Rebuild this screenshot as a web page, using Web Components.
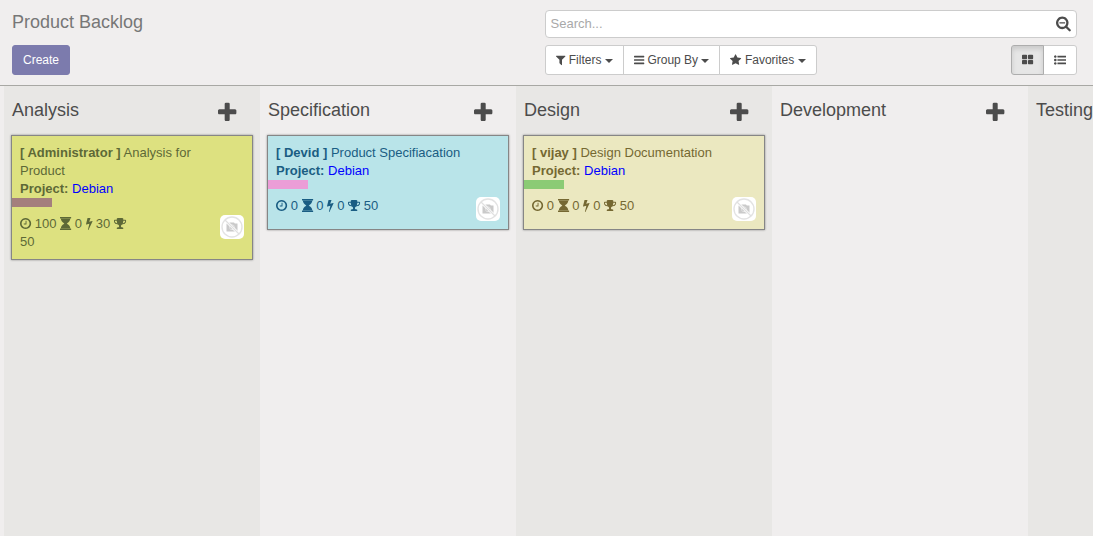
<!DOCTYPE html>
<html lang="en">
<head>
<meta charset="utf-8">
<title>Product Backlog</title>
<style>
html, body { margin: 0; height: 100%; overflow: hidden; }
body { font: 13px/18px "Liberation Sans", Arial, sans-serif; color: #4c4c4c; background: #f0eeee; }
</style>
</head>
<body>
<backlog-app></backlog-app>
<script>
// name: [left edge, advance width, path] on a 1792-unit em, baseline at 1536
const ICONS = {
  clock: [128, 1536, 'M1024 544v448q0 14-9 23t-23 9h-320q-14 0-23-9t-9-23v-64q0-14 9-23t23-9h224v-352q0-14 9-23t23-9h64q14 0 23 9t9 23zm416 352q0-148-73-273t-198-198-273-73-273 73-198 198-73 273 73 273 198 198 273 73 273-73 198-198 73-273zm224 0q0 209-103 385.500t-279.500 279.500-385.500 103-385.500-103-279.500-279.500-103-385.500 103-385.500 279.500-279.500 385.500-103 385.500 103 279.500 279.500 103 385.500z'],
  hourglass: [128, 1536, 'M1632 1600q14 0 23 9t9 23v128q0 14-9 23t-23 9h-1472q-14 0-23-9t-9-23v-128q0-14 9-23t23-9h1472zM258 1536q3-55 16-107t30-95 46-87 53.500-76 64.500-69.500 66-60 70.500-55 66.500-47.500 65-43q-43-28-65-43t-66.500-47.500-70.500-55-66-60-64.500-69.500-53.500-76-46-87-30-95-16-107h1276q-3 55-16 107t-30 95-46 87-53.500 76-64.500 69.500-66 60-70.500 55-66.500 47.500-65 43q43 28 65 43t66.500 47.500 70.500 55 66 60 64.500 69.500 53.500 76 46 87 30 95 16 107h-1276zM1632 0q14 0 23 9t9 23v128q0 14-9 23t-23 9h-1472q-14 0-23-9t-9-23v-128q0-14 9-23t23-9h1472z'],
  bolt: [448, 896, 'M1333 566q18 20 7 44l-540 1157q-13 25-42 25-4 0-14-2-17-5-25.500-19t-4.500-30l197-808-406 101q-4 1-12 1-18 0-31-11-18-15-13-39l201-825q4-14 16-23t28-9h328q19 0 32 12.500t13 29.500q0 8-5 18l-171 463 396-98q8-2 12-2 19 0 34 15z'],
  trophy: [64, 1664, 'M522 883q-74-162-74-371h-256v96q0 78 94.500 162t235.500 113zm1078-275v-96h-256q0 209-74 371 141-29 235.500-113t94.500-162zm128-128v128q0 71-41.500 143t-112 130-173 97.500-215.500 44.500q-42 54-95 95-38 34-52.500 72.500t-14.500 89.500q0 54 30.500 91t97.500 37q75 0 133.500 45.500t58.500 114.500v64q0 14-9 23t-23 9h-832q-14 0-23-9t-9-23v-64q0-69 58.500-114.500t133.500-45.500q67 0 97.500-37t30.500-91q0-51-14.500-89.500t-52.500-72.500q-53-41-95-95-113-5-215.500-44.500t-173-97.500-112-130-41.500-143v-128q0-40 28-68t68-28h288v-96q0-66 47-113t113-47h576q66 0 113 47t47 113v96h288q40 0 68 28t28 68z'],
  plus: [192, 1408, 'M1600 736v192q0 40-28 68t-68 28h-416v416q0 40-28 68t-68 28h-192q-40 0-68-28t-28-68v-416h-416q-40 0-68-28t-28-68v-192q0-40 28-68t68-28h416v-416q0-40 28-68t68-28h192q40 0 68 28t28 68v416h416q40 0 68 28t28 68z'],
  filter: [192, 1408, 'M1595 295q17 41-14 70l-493 493v742q0 42-39 59-13 5-25 5-27 0-45-19l-256-256q-19-19-19-45v-486l-493-493q-31-29-14-70 17-39 59-39h1280q42 0 59 39z'],
  bars: [128, 1536, 'M1664 1344v128q0 26-19 45t-45 19h-1408q-26 0-45-19t-19-45v-128q0-26 19-45t45-19h1408q26 0 45 19t19 45zm0-512v128q0 26-19 45t-45 19h-1408q-26 0-45-19t-19-45v-128q0-26 19-45t45-19h1408q26 0 45 19t19 45zm0-512v128q0 26-19 45t-45 19h-1408q-26 0-45-19t-19-45v-128q0-26 19-45t45-19h1408q26 0 45 19t19 45z'],
  star: [64, 1664, 'M1728 647q0 22-26 48l-363 354 86 500q1 7 1 20 0 21-10.500 35.500t-30.500 14.500q-19 0-40-12l-449-236-449 236q-22 12-40 12-21 0-31.500-14.500t-10.500-35.500q0-6 2-20l86-500-364-354q-25-27-25-48 0-37 56-46l502-73 225-455q19-41 49-41t49 41l225 455 502 73q56 9 56 46z'],
  caret: [384, 1024, 'M1408 704q0 26-19 45l-448 448q-19 19-45 19t-45-19l-448-448q-19-19-19-45t19-45 45-19h896q26 0 45 19t19 45z'],
  'search-minus': [64, 1664, 'M1088 736v64q0 13-9.500 22.500t-22.500 9.500h-576q-13 0-22.500-9.500t-9.500-22.500v-64q0-13 9.500-22.500t22.500-9.500h576q13 0 22.500 9.500t9.500 22.500zm128 32q0-185-131.500-316.500t-316.500-131.500-316.500 131.500-131.500 316.500 131.500 316.500 316.500 131.500 316.500-131.500 131.500-316.500zm512 832q0 53-37.500 90.500t-90.500 37.500q-54 0-90-38l-343-342q-179 124-399 124-143 0-273.500-55.500t-225-150-150-225-55.500-273.500 55.500-273.500 150-225 225-150 273.500-55.500 273.500 55.500 225 150 150 225 55.500 273.500q0 220-124 399l343 343q37 37 37 90z'],
  'th-large': [64, 1664, 'M832 1024v384q0 52-38 90t-90 38h-512q-52 0-90-38t-38-90v-384q0-52 38-90t90-38h512q52 0 90 38t38 90zm0-768v384q0 52-38 90t-90 38h-512q-52 0-90-38t-38-90v-384q0-52 38-90t90-38h512q52 0 90 38t38 90zm896 768v384q0 52-38 90t-90 38h-512q-52 0-90-38t-38-90v-384q0-52 38-90t90-38h512q52 0 90 38t38 90zm0-768v384q0 52-38 90t-90 38h-512q-52 0-90-38t-38-90v-384q0-52 38-90t90-38h512q52 0 90 38t38 90z'],
  'list-ul': [0, 1792, 'M384 1408q0 80-56 136t-136 56-136-56-56-136 56-136 136-56 136 56 56 136zm0-512q0 80-56 136t-136 56-136-56-56-136 56-136 136-56 136 56 56 136zm1408 416v192q0 13-9.500 22.500t-22.500 9.500h-1216q-13 0-22.500-9.500t-9.500-22.500v-192q0-13 9.500-22.500t22.500-9.500h1216q13 0 22.500 9.500t9.500 22.500zm-1408-928q0 80-56 136t-136 56-136-56-56-136 56-136 136-56 136 56 56 136zm1408 416v192q0 13-9.500 22.500t-22.500 9.500h-1216q-13 0-22.500-9.500t-9.500-22.500v-192q0-13 9.500-22.500t22.500-9.500h1216q13 0 22.500 9.500t9.500 22.500zm0-512v192q0 13-9.500 22.500t-22.500 9.500h-1216q-13 0-22.500-9.500t-9.500-22.500v-192q0-13 9.500-22.500t22.500-9.500h1216q13 0 22.500 9.500t9.500 22.500z']
};
// The menu icon's bars span exactly 128..1664
ICONS.bars[2] = [256, 768, 1280].map(y => `M192 ${y}h1408q64 0 64 64v128q0 64-64 64h-1408q-64 0-64-64v-128q0-64 64-64z`).join('');

class UiElement extends HTMLElement {
  connectedCallback() {
    if (this.shadowRoot) return;
    this.attachShadow({ mode: 'open' }).innerHTML = this.render();
  }
}

customElements.define('fa-icon', class extends UiElement {
  render() {
    const [x, w, d] = ICONS[this.getAttribute('name')];
    return `<style>
      :host { display: inline-block; width: ${w / 1792}em; height: 1em; line-height: 1; vertical-align: -0.143em; }
      svg { display: block; width: 100%; height: 100%; fill: currentColor; overflow: visible; }
    </style><svg viewBox="${x} 0 ${w} 1792" preserveAspectRatio="none"><path d="${d}"/></svg>`;
  }
});

customElements.define('search-box', class extends UiElement {
  render() {
    return `<style>
      :host { display: flex; box-sizing: border-box; height: 28px; align-items: center; justify-content: space-between;
        padding: 0 5px 0 4.5px; background: #fff; border: 1px solid #ccc; border-radius: 4px; color: #a9a9a9; }
      fa-icon { font-size: 16px; color: #4c4c4c; }
    </style><span>Search...</span><fa-icon name="search-minus"></fa-icon>`;
  }
});

customElements.define('button-group', class extends UiElement {
  render() { return `<style>:host { display: flex; }</style><slot></slot>`; }
});

customElements.define('tool-button', class extends UiElement {
  render() {
    const icon = this.getAttribute('icon');
    const label = this.textContent.trim();
    const body = icon && label
      ? `<fa-icon name="${icon}"></fa-icon> <slot></slot> <i></i>`
      : icon ? `<fa-icon name="${icon}"></fa-icon>` : '<slot></slot>';
    return `<style>
      :host { display: block; box-sizing: border-box; height: 30px; padding: 5px 10px; font-size: 12px; line-height: 18px;
        white-space: nowrap; background: #fff; border: 1px solid #ccc; color: #4c4c4c; text-align: center; }
      :host(:not(:first-child)) { margin-left: -1px; }
      :host(:first-child) { border-radius: 3px 0 0 3px; }
      :host(:last-child) { border-radius: 0 3px 3px 0; }
      :host([primary]) { border-radius: 3px; background: #7c7bad; border-color: #7c7bad; color: #fff; }
      :host([active]) { background: #e6e6e6; border-color: #adadad; box-shadow: inset 0 3px 5px rgba(0,0,0,.125); z-index: 1; position: relative; }
      i { display: inline-block; border: 4px solid transparent; border-top-color: currentColor; border-bottom: 0; vertical-align: middle; }
    </style>${body}`;
  }
});

customElements.define('control-panel', class extends UiElement {
  render() {
    return `<style>
      :host { display: grid; box-sizing: border-box; height: 86px; grid-template-columns: 533px 532px; grid-template-rows: 28px 30px;
        row-gap: 7px; padding: 10px 16px 0 12px; border-bottom: 1px solid #a8a8a4; background: #f0eeee; }
      h1 { margin: 0; font-size: 18px; line-height: 24px; font-weight: 400; color: #777; }
      .row { display: flex; justify-content: space-between; }
    </style>
    <h1>Product Backlog</h1>
    <search-box></search-box>
    <div class="row"><tool-button primary>Create</tool-button></div>
    <div class="row">
      <button-group>
        <tool-button icon="filter">Filters</tool-button>
        <tool-button icon="bars">Group By</tool-button>
        <tool-button icon="star">Favorites</tool-button>
      </button-group>
      <button-group>
        <tool-button icon="th-large" active></tool-button>
        <tool-button icon="list-ul"></tool-button>
      </button-group>
    </div>`;
  }
});

customElements.define('user-avatar', class extends UiElement {
  render() {
    return `<style>:host { display: block; width: 24px; height: 24px; } svg { display: block; }</style>
    <svg width="24" height="24" viewBox="0 0 24 24">
      <rect width="24" height="24" rx="5" fill="#fff"/>
      <path d="M6.5 8.5h2.200l.8-1h4.500l.8 1h2.700v8h-11z" fill="#cacaca"/>
      <circle cx="12" cy="12.300" r="2.400" fill="#bababa" stroke="#ececec" stroke-width=".8"/>
      <path d="M5 5l14 14" stroke="#fff" stroke-width="2.600"/>
      <circle cx="12" cy="12" r="10" fill="none" stroke="#e3e3e3" stroke-width="1.400"/>
      <path d="M5 5l14 14" stroke="#e0e0e0" stroke-width="1.200"/>
    </svg>`;
  }
});

customElements.define('backlog-card', class extends UiElement {
  render() {
    const a = n => this.getAttribute(n);
    const [time, wait, power, score] = a('stats').split(' ');
    return `<style>
      :host { display: block; border: 1px solid #868686; box-shadow: 0 0 2px rgba(0,0,0,.4); padding: 8px; color: var(--ink); background: var(--paper); }
      .title { padding-right: 16px; }
      a { color: #00f; }
      .bar { width: 40px; height: 9px; margin: 0 0 8px -8px; background: var(--bar); }
      .foot { display: flex; justify-content: space-between; align-items: flex-start; }
      .stats { width: 114px; }
    </style>
    <div class="title"><b>[ ${a('owner')} ]</b> <slot></slot></div>
    <div><b>Project:</b> <a>Debian</a></div>
    <div class="bar"></div>
    <div class="foot">
      <div class="stats"><fa-icon name="clock"></fa-icon> ${time} <fa-icon name="hourglass"></fa-icon> ${wait} <fa-icon name="bolt"></fa-icon> ${power} <fa-icon name="trophy"></fa-icon> ${score}</div>
      <user-avatar></user-avatar>
    </div>`;
  }
});

customElements.define('board-column', class extends UiElement {
  render() {
    const add = this.hasAttribute('last') ? '' : '<fa-icon name="plus"></fa-icon>';
    return `<style>
      :host { display: block; box-sizing: border-box; flex: 0 0 256px; padding: 0 7px; background: #f0eeee; }
      :host(:nth-child(odd)) { background: #e8e7e5; }
      header { display: flex; justify-content: space-between; height: 49px; box-sizing: border-box; padding: 12px 17px 0 1px; }
      h2 { margin: 0; font-size: 18px; line-height: 24px; font-weight: 400; }
      fa-icon { font-size: 23.400px; margin-top: 3px; }
    </style><header><h2>${this.getAttribute('label')}</h2>${add}</header><slot></slot>`;
  }
});

customElements.define('backlog-app', class extends UiElement {
  render() {
    return `<style>
      :host { display: flex; flex-direction: column; height: 100vh; overflow: hidden; }
      main { flex: 1; display: flex; padding-left: 4px; overflow: hidden; }
      .lime { --paper: #dde180; --ink: #5d6937; --bar: #a47f7d; }
      .sky { --paper: #b9e4e9; --ink: #1a5d83; --bar: #eb9dd7; }
      .sand { --paper: #ebe8c0; --ink: #756832; --bar: #8bcb75; }
    </style>
    <control-panel></control-panel>
    <main>
      <board-column label="Analysis"><backlog-card class="lime" owner="Administrator" stats="100 0 30 50">Analysis for Product</backlog-card></board-column>
      <board-column label="Specification"><backlog-card class="sky" owner="Devid" stats="0 0 0 50">Product Specifiacation</backlog-card></board-column>
      <board-column label="Design"><backlog-card class="sand" owner="vijay" stats="0 0 0 50">Design Documentation</backlog-card></board-column>
      <board-column label="Development"></board-column>
      <board-column label="Testing" last></board-column>
    </main>`;
  }
});
</script>
</body>
</html>
